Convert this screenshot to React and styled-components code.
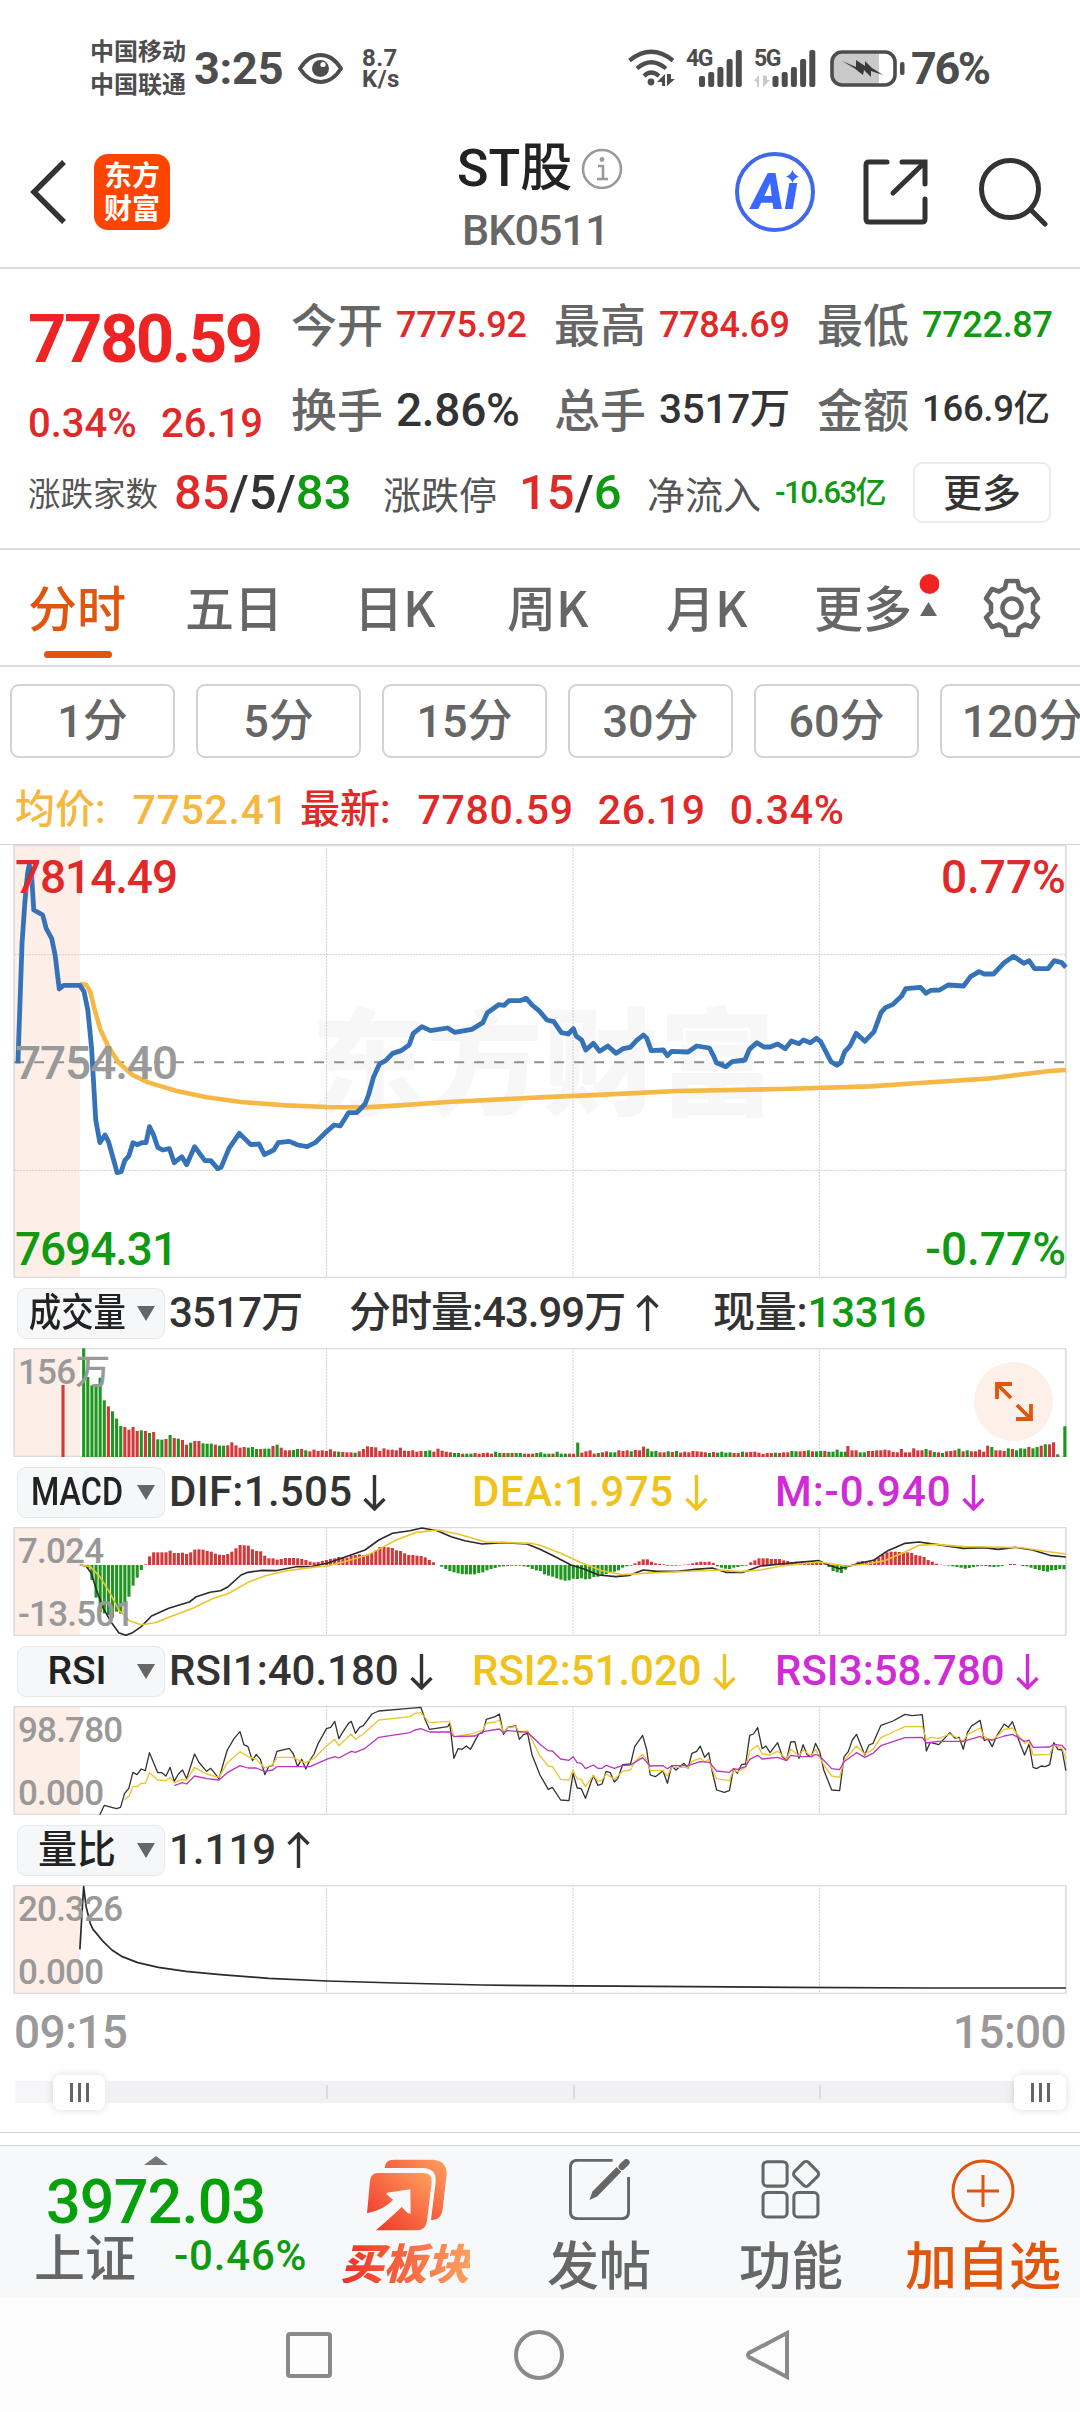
import styled, { createGlobalStyle, css } from 'styled-components';

const RED = '#e02a2a';
const GREEN = '#0f9a12';
const ORANGE = '#e0560c';
const YELLOW = '#f0c31c';
const PURPLE = '#d02bd6';

const GlobalStyle = createGlobalStyle`
  * { box-sizing: border-box; }
  body {
    margin: 0;
    background: #fff;
    font-family: Roboto, 'Noto Sans CJK SC', sans-serif;
    font-weight: 500;
    color: #333;
  }
`;

/* ---------- chart data, 3136 units across the screen ---------- */

const GRID_X = [948, 1664, 2379];

const PRICE =
  '52,670 60,430 64,310 72,190 80,100 85,75 92,110 98,210 112,218 124,225 134,265 150,295 160,345 172,447 185,436 232,436 244,455 255,510 266,625 278,840 290,908 305,885 315,905 330,960 340,998 352,995 362,962 374,948 386,908 398,914 412,908 424,908 434,860 446,885 458,922 472,930 492,926 506,968 528,950 542,974 565,920 595,962 612,962 632,986 642,982 665,925 695,880 728,914 752,912 768,944 795,930 808,908 840,904 865,915 892,920 915,908 945,878 970,855 988,858 1012,818 1036,818 1060,792 1070,765 1085,710 1102,672 1120,662 1140,640 1165,632 1188,615 1200,580 1225,560 1250,572 1300,564 1320,577 1370,568 1402,548 1415,518 1448,494 1464,496 1478,482 1510,482 1528,475 1545,495 1568,515 1588,540 1608,545 1630,578 1650,582 1665,566 1673,588 1689,600 1701,630 1723,610 1741,634 1765,618 1789,640 1809,626 1830,622 1848,602 1868,585 1878,595 1891,632 1926,630 1938,647 1950,634 1998,636 2023,618 2060,624 2073,650 2080,668 2108,680 2126,665 2163,660 2176,628 2198,608 2218,621 2236,621 2258,612 2280,626 2298,603 2320,611 2333,600 2353,608 2371,595 2383,605 2413,665 2430,676 2441,668 2453,635 2468,618 2486,580 2511,604 2538,575 2558,518 2571,503 2593,493 2618,468 2630,446 2673,442 2689,460 2703,451 2728,450 2753,435 2798,438 2818,410 2843,395 2858,402 2885,402 2916,368 2943,349 2973,370 2988,362 3004,386 3043,386 3061,362 3083,368 3095,382';
const AVERAGE =
  '232,432 250,434 262,455 275,510 292,570 315,620 345,668 385,705 430,727 510,752 600,772 700,786 830,796 950,801 1060,802 1160,796 1300,786 1568,772 1768,763 1968,753 2268,747 2528,739 2668,729 2868,716 3048,693 3095,690';

// every run is [x of its first bar, values]; green bars are negative
const VOLUME = [
  [183, [216]],
  [243, [-326, -240, -215, -215, -238, -170, 152, -137, -115, -93, 90, 82, 90, 78, -80, 78, -72, 75, -53, -52, 54, -66, 57, -55, 51, 37, -43, 48, 48, -41, -40, -40, 37, -34, -34, 35, 44, 35, 28, 30, -28, -30, -24, 24, -25, -25, 33, -37, 28, 20, 20]],
  [852, [-21, -24, 24, -20, 17, 22, 18, 20, 18, 23, 17, -16, 15, 14, 14, -13, 17, 24, 32, 30, 29, 18, 26, 22, 22, 20, 28, 19, 18, 20, 16, 18]],
  [1236, [-18, -20, 16, 25, 19, 16, 14, -12, -12, 10, -10, -10, 12, 10, 12, 13, 10, -16, -12, 12, -12, 12, -12, -12, 10, 10, 10, -12]],
  [1570, [-14, -10, -10, 10, -16, -10, -10, 10, 10, -43, 13, 17, 20, 10, -12, 14, 17, -14, -14, 20, 18, 20, -17, 21, 20, 31, -25, -17, -18, 14, 14, -17, 15, -18, 13, 16, 14, 18, 17, 16, 14, -12, 15, -13, -16, -13, -14, 12, 12]],
  [2156, [-16, 14, 15, 16, 13, 9, 12, 12, -13, 12, 14, 14, -18, -17, 17, 18, -20, 17, -17, -18, 18, -16, -16, -22, -16, -16]],
  [2462, [33, 20, 20, -14, -14, 18, 18, 20, 20, 22, 20, 15, 14, 24, 14, 14, 26, 20, 20, -24, 20, -15, 14, -12, 17, 18, 20, -25, 17, -20, 17, 17, 22, 16]],
  [2868, [34, -30, 20, 20, 18, -26, 24, -20, -26, -25, 30, -26, -30, 34, -38, 38, 44, -8]],
  [3092, [-92]],
];
const MACD_BARS = [
  [255, [-10, -45, -98, -142, -145, -150, -158, -140, -146, -120, -95, -62, -38, -15, 2, 26, 38, 38, 38, 38, 43, 36, 36, 37, 33, 38, 46, 47, 46, 42, 40, 34, 31, 30, 33, 40, 50, 60, 59, 58, 47, 42, 41, 28, 20, 20, 16, 18, 21, 21, 21, 20, 18, 15, 10, 8]],
  [924, [9, 12, 15, 18, 20, 24, 22, 22, 28, 30, 32, 30, 32, 36, 44, 54, 54, 53, 51, 44, 42, 35, 30, 30, 28, 27, 23, 15, 8, 0, -5, -12, -18, -22, -25, -27, -28, -28, -28, -24, -22, -16, -12, -9, -5, -4, -3, -2, -2, -2, -4, -6, -12, -16]],
  [1569, [-18, -28, -32, -35, -40, -44, -47, -46, -41, -42, -40, -43, -42, -36, -35, -32, -27, -24, -20, -16, -8, -4, -2, 5, 11, 17, 17, 10, 5, 3, 2, -2, -2, -2, -1, 1, 2, 5, 8, 10, 9, 10, 6, -4, -8, -11, -12, -8, -6, -3, -2]],
  [2180, [8, 14, 20, 20, 20, 18, 18, 18, 14, 12, 9, 10, 8, 8, 8, 8, 8, 6, 2, -6, -18, -22, -24, -14, -4]],
  [2480, [2, 10, 12, 8, 10, 16, 22, 32, 38, 40, 40, 39, 38, 38, 36, 30, 28, 24, 15, 10, 4, 1, -1, -2, -4, -6, -8, -11, -9, -6, -4, -2, -3, -5, -6, -5, -3, 0, 3, 3, 0, -3, -4, -8, -12, -15, -18, -20, -16, -15, -12, -13]],
];
const DIF =
  '232,855 250,858 265,880 280,930 300,985 325,1030 345,1058 365,1066 385,1058 410,1040 440,1008 490,985 530,972 550,966 570,950 610,937 640,932 660,922 700,885 720,877 760,871 800,872 860,860 900,860 950,850 1000,832 1060,810 1100,780 1140,760 1190,752 1225,744 1270,752 1310,770 1350,782 1400,792 1460,788 1530,792 1568,808 1608,828 1658,855 1698,868 1738,885 1788,890 1828,886 1868,870 1908,874 1968,874 2018,868 2068,864 2108,877 2158,877 2208,858 2268,852 2318,847 2378,842 2408,856 2438,866 2488,852 2538,840 2578,812 2628,790 2668,786 2718,793 2798,805 2858,803 2898,808 2948,802 2998,810 3048,826 3095,831';
const DEA =
  '232,855 262,860 290,890 320,940 345,990 375,1022 410,1034 450,1028 500,1008 560,985 620,955 660,942 720,907 770,887 830,873 900,863 950,858 1000,845 1070,824 1110,802 1150,780 1210,757 1270,750 1330,762 1410,786 1480,788 1540,790 1568,796 1628,820 1688,848 1748,872 1808,884 1868,880 1948,876 2018,873 2088,870 2148,875 2208,870 2268,858 2378,846 2418,852 2458,858 2518,852 2568,842 2628,816 2668,796 2718,793 2798,800 2868,801 2968,803 3028,813 3095,822';
const RSI1 =
  '290,524 303,496 338,506 350,502 362,460 374,445 386,397 398,404 410,387 422,392 434,338 446,368 458,398 470,398 482,408 494,382 506,424 518,402 530,390 542,416 565,342 577,366 600,394 612,385 636,416 648,372 660,330 680,295 697,275 708,314 720,320 733,362 744,343 756,358 769,404 780,380 792,376 804,334 840,325 852,342 864,380 876,358 888,387 900,360 912,342 924,310 948,266 960,262 972,244 984,296 996,275 1012,250 1020,244 1032,280 1044,262 1055,257 1080,222 1100,213 1180,206 1222,202 1235,240 1247,268 1300,260 1306,250 1318,355 1330,326 1342,328 1354,318 1366,328 1378,305 1390,282 1402,278 1412,238 1438,230 1450,222 1462,283 1474,262 1498,258 1508,298 1520,284 1532,280 1545,345 1568,405 1592,448 1604,442 1628,480 1652,482 1664,400 1676,444 1688,446 1700,475 1723,406 1736,436 1748,432 1760,394 1772,398 1784,426 1794,415 1808,374 1831,372 1843,320 1866,286 1878,330 1888,405 1903,410 1925,392 1938,430 1950,378 1963,390 1986,370 1998,384 2009,340 2023,334 2033,318 2046,352 2058,338 2068,395 2081,450 2103,457 2118,452 2130,386 2141,400 2153,374 2165,372 2177,286 2188,282 2200,263 2213,326 2224,318 2236,338 2258,308 2272,350 2284,360 2296,306 2308,305 2320,355 2332,314 2344,345 2356,350 2368,310 2380,335 2392,390 2415,450 2438,452 2451,350 2463,335 2475,300 2487,283 2511,345 2523,315 2535,310 2558,256 2593,243 2628,223 2648,227 2678,224 2690,333 2701,307 2726,314 2758,278 2773,294 2785,292 2797,328 2809,278 2821,258 2846,241 2858,302 2868,296 2881,320 2893,290 2916,252 2928,262 2940,245 2958,300 2975,345 2988,312 3000,382 3010,386 3023,378 3035,380 3048,374 3060,308 3072,328 3084,330 3095,392';
const RSI2 =
  '362,478 374,470 386,440 398,440 410,430 422,430 434,398 458,420 482,422 494,412 506,428 530,418 542,420 565,382 600,402 636,412 660,368 697,335 720,350 744,358 769,384 792,374 804,352 850,352 876,365 888,368 912,355 948,318 972,298 984,317 1020,282 1032,298 1055,282 1100,240 1190,230 1205,220 1222,218 1247,248 1306,244 1318,290 1366,282 1402,270 1412,250 1438,246 1450,240 1462,278 1474,262 1498,260 1508,278 1532,272 1568,348 1592,378 1604,380 1628,418 1652,420 1664,390 1676,416 1688,418 1700,440 1723,406 1736,424 1748,420 1760,402 1784,418 1808,394 1831,390 1843,365 1866,343 1878,360 1888,392 1925,392 1938,408 1950,382 1998,382 2009,364 2033,355 2046,366 2058,358 2068,388 2081,416 2118,422 2130,390 2141,396 2165,382 2177,334 2200,316 2213,342 2236,345 2258,334 2284,358 2296,328 2320,348 2332,330 2356,348 2368,328 2392,375 2415,408 2438,412 2451,362 2487,318 2511,342 2535,328 2558,293 2593,276 2628,260 2678,259 2690,300 2701,292 2726,295 2758,282 2797,303 2809,284 2846,264 2858,290 2881,302 2916,268 2940,264 2958,288 2975,310 2988,303 3000,345 3048,343 3060,314 3084,325 3095,356';
const RSI3 =
  '506,437 530,428 542,432 565,408 600,416 636,420 660,398 697,377 720,384 744,384 769,394 792,390 804,380 876,380 900,380 948,358 972,350 984,354 1020,334 1032,337 1060,325 1100,292 1190,278 1205,270 1222,266 1247,276 1306,276 1318,290 1380,288 1402,275 1450,267 1462,278 1474,272 1532,277 1568,313 1592,332 1604,333 1628,357 1652,361 1664,350 1676,368 1688,370 1700,386 1723,375 1736,385 1748,385 1760,376 1784,385 1808,376 1831,375 1866,353 1888,378 1925,377 1938,386 1950,377 1998,377 2033,365 2060,367 2081,393 2118,397 2130,386 2141,388 2165,380 2177,358 2200,346 2213,357 2258,352 2284,362 2296,346 2320,350 2356,350 2368,343 2380,348 2415,386 2438,389 2451,365 2487,338 2511,352 2535,340 2558,317 2593,305 2628,293 2678,292 2690,309 2726,304 2797,304 2846,289 2858,298 2881,300 2916,288 2940,283 2975,304 2988,300 3000,322 3048,321 3060,313 3084,316 3095,330';
const RATIO =
  '232,928 238,820 243,740 250,800 262,850 270,868 280,880 300,905 325,930 355,950 400,968 460,982 540,994 640,1004 780,1015 950,1023 1150,1029 1400,1035 1568,1037 1900,1039 2300,1042 2700,1044 3095,1044';

/* ---------- chart pieces ---------- */

function Line({ points, color, width = 1.6 }) {
  return (
    <polyline
      points={points}
      fill="none"
      stroke={color}
      strokeWidth={width}
      strokeLinejoin="round"
      vectorEffect="non-scaling-stroke"
    />
  );
}

function Bars({ runs, base }) {
  return runs.map(([start, values]) =>
    values.map((v, i) => (
      <rect
        key={`${start}-${i}`}
        x={start - 4.5 + i * 11.95}
        y={base(v)}
        width="9"
        height={Math.abs(v)}
        fill={v < 0 ? '#1f961f' : '#d03a3a'}
      />
    ))
  );
}

function Plot({ top, height, rows = [], children }) {
  const bottom = top + height;
  return (
    <PlotSvg
      viewBox={`0 ${top} 3136 ${height}`}
      preserveAspectRatio="none"
      $height={height / 3}>
      <rect x="41" y={top} width="191" height={height} fill="#fdeee7" />
      {GRID_X.map((x) => (
        <line key={x} x1={x} x2={x} y1={top} y2={bottom} stroke="#cfcfcf" strokeWidth="1" strokeDasharray="2 1" vectorEffect="non-scaling-stroke" />
      ))}
      {rows.map((y) => (
        <line key={y} x1="41" x2="3095" y1={y} y2={y} stroke="#cfcfcf" strokeWidth="1" strokeDasharray="2 1" vectorEffect="non-scaling-stroke" />
      ))}
      <rect x="41" y={top + 1.5} width="3054" height={height - 3} fill="none" stroke="#dcdcdc" strokeWidth="1.6" vectorEffect="non-scaling-stroke" />
      {children}
    </PlotSvg>
  );
}

/* ---------- icons ---------- */

function Arrow({ up }) {
  return (
    <ArrowSvg viewBox="0 0 22 37">
      <path
        d={up ? 'M11 36V2M1 12L11 2L21 12' : 'M11 1V35M1 25L11 35L21 25'}
        fill="none"
        stroke="currentColor"
        strokeWidth="3.4"
      />
    </ArrowSvg>
  );
}

function Signal({ label, x, dim }) {
  return (
    <SignalBox>
      <SignalLabel>{label}</SignalLabel>
      <svg width="64" height="37" viewBox="0 0 64 37">
        {dim && <path d="M0 31l5-6v12h-2v-5zM9 25v12l7-7h-3v-4z" fill="#cacaca" />}
        {[11, 15, 20, 28, 37].map((h, i) => (
          <rect key={h} x={x + i * 9.2} y={37 - h} width="6" height={h} rx="2" fill="#4d4d4d" />
        ))}
      </svg>
    </SignalBox>
  );
}

function StatusRow() {
  return (
    <StatusBar>
      <Carriers>
        <span>中国移动</span>
        <span>中国联通</span>
      </Carriers>
      <StatusBig>3:25</StatusBig>
      <svg width="45" height="31" viewBox="0 0 45 31">
        <path d="M2 15.5C8 6 15 2 22.500 2S37 6 43 15.500C37 25 30 29 22.500 29S8 25 2 15.500z" fill="none" stroke="#4d4d4d" strokeWidth="3.800" />
        <circle cx="22.500" cy="15.500" r="8.500" fill="#4d4d4d" />
        <circle cx="25" cy="11.500" r="2.600" fill="#fff" />
      </svg>
      <Speed>
        <span>8.7</span>
        <span>K/s</span>
      </Speed>
      <svg width="48" height="38" viewBox="0 0 48 38">
        <g fill="none" stroke="#4d4d4d" strokeWidth="4.200">
          <path d="M1.500 11.500Q23 -6 45 11.500" />
          <path d="M9 19.500Q23 7 38 19.500" />
          <path d="M16 27Q23 20 31 27" />
        </g>
        <circle cx="23" cy="33" r="3.400" fill="#4d4d4d" />
        <path d="M29 33l8-8v12h-3v-4zM39 25v12l8-7h-4v-5z" fill="#4d4d4d" />
      </svg>
      <Signal label="4G" x={13} />
      <Signal label="5G" x={18.5} dim />
      <svg width="76" height="37" viewBox="0 0 76 37">
        <path d="M12 2H49V35H12Q2 35 2 25V12Q2 2 12 2z" fill="#c9c9c9" />
        <rect x="2" y="2" width="63" height="33" rx="10" fill="none" stroke="#4d4d4d" strokeWidth="3.600" />
        <rect x="70" y="12" width="4.500" height="13" rx="2" fill="#4d4d4d" />
        <path d="M12 11L26 17L26 10L35 16V11L42 18L53 25L41 21V27L34 20L33 25L24 18z" fill="#3a3a3a" />
      </svg>
      <StatusBig $tight>76%</StatusBig>
    </StatusBar>
  );
}

function TopBar() {
  return (
    <Header>
      <HeaderLeft>
        <svg width="38" height="64" viewBox="0 0 38 64">
          <path d="M34 2L4 32L34 62" fill="none" stroke="#333" strokeWidth="5.500" />
        </svg>
        <Brand>
          <span>东方</span>
          <span>财富</span>
        </Brand>
      </HeaderLeft>
      <Title>
        <TitleName>
          ST股
          <svg width="42" height="42" viewBox="0 0 42 42">
            <circle cx="21" cy="21" r="19" fill="none" stroke="#9a9a9a" strokeWidth="2.600" />
            <path d="M17 18h5v13M16 31h11" fill="none" stroke="#9a9a9a" strokeWidth="2.600" />
            <circle cx="21" cy="11.500" r="2.400" fill="#9a9a9a" />
          </svg>
        </TitleName>
        <TitleCode>BK0511</TitleCode>
      </Title>
      <AiButton>
        A<i>ı</i>
        <AiStar viewBox="0 0 14 14">
          <path d="M7 0Q8.500 5 14 7Q8.500 9 7 14Q5.500 9 0 7Q5.500 5 7 0z" fill="#3a68ff" />
        </AiStar>
      </AiButton>
      <ShareIcon viewBox="0 0 66 66">
        <path d="M24 3H6Q3 3 3 6V60Q3 63 6 63H59Q62 63 62 60V40M39 3H62V25M61 4L30 34" />
      </ShareIcon>
      <SearchIcon viewBox="0 0 69 69">
        <circle cx="31" cy="31" r="28.500" />
        <path d="M52 52L66 66" />
      </SearchIcon>
    </Header>
  );
}

const QUOTES = [
  { label: '今开', value: '7775.92', color: RED, size: 36 },
  { label: '最高', value: '7784.69', color: RED, size: 36 },
  { label: '最低', value: '7722.87', color: GREEN, size: 36 },
  { label: '换手', value: '2.86%', size: 46 },
  { label: '总手', value: '3517万', size: 40.5 },
  { label: '金额', value: '166.9亿', size: 36.5 },
];

function QuotePanel() {
  return (
    <Quote>
      <QuoteMain>
        <div>
          <LastPrice>7780.59</LastPrice>
          <Change>
            <span>0.34%</span>
            <span>26.19</span>
          </Change>
        </div>
        <QuoteGrid>
          {QUOTES.map((q) => (
            <QuoteItem key={q.label}>
              <QuoteLabel>{q.label}</QuoteLabel>
              <QuoteValue $color={q.color} $size={q.size}>
                {q.value}
              </QuoteValue>
            </QuoteItem>
          ))}
        </QuoteGrid>
      </QuoteMain>
      <Breadth>
        <BreadthLabel $size={32.5}>涨跌家数</BreadthLabel>
        <Counts>
          <Up>85</Up>/5/<Down>83</Down>
        </Counts>
        <BreadthLabel $size={38}>涨跌停</BreadthLabel>
        <Counts>
          <Up>15</Up>/<Down>6</Down>
        </Counts>
        <BreadthLabel $size={38}>净流入</BreadthLabel>
        <Inflow>-10.63亿</Inflow>
        <MoreButton>更多</MoreButton>
      </Breadth>
    </Quote>
  );
}

function PeriodTabs() {
  return (
    <Tabs>
      <Tab $active>分时</Tab>
      <Tab>五日</Tab>
      <Tab>日K</Tab>
      <Tab>周K</Tab>
      <Tab>月K</Tab>
      <Tab>
        更多
        <TabBadge viewBox="0 0 20 45">
          <circle cx="10.500" cy="11" r="10" fill="#f02323" />
          <path d="M1 43L9.500 29L18 43z" fill="#666" />
        </TabBadge>
      </Tab>
      <svg width="60" height="60" viewBox="0 0 60 60" fill="none" stroke="#666" strokeWidth="4.600" strokeLinejoin="round">
        <path d="M24.500 3H35.500L37 10L43 13.500L50 11L56 20.500L51 26V34L56 39.500L50 49L43 46.500L37 50L35.500 57H24.500L23 50L17 46.500L10 49L4 39.500L9 34V26L4 20.500L10 11L17 13.500L23 10z" />
        <circle cx="30" cy="30" r="9.500" />
      </svg>
    </Tabs>
  );
}

function Indicator({ name, squeeze, values, labels, top, children, extra }) {
  return (
    <>
      <IndicatorHead>
        <Picker>
          <PickerName $squeeze={squeeze}>{name}</PickerName>
          <svg width="18" height="15" viewBox="0 0 18 15">
            <path d="M0 0H18L9 15z" fill="#666" />
          </svg>
        </Picker>
        {values.map((v) => (
          <IndicatorValue key={v.text} $color={v.color} $width={v.width} $spacing={v.spacing}>
            {v.text}
            {v.green && <Down>{v.green}</Down>}
            {v.dir && <Arrow up={v.dir === 'up'} />}
          </IndicatorValue>
        ))}
      </IndicatorHead>
      <Pane>
        <Plot top={top} height={327}>
          {children}
        </Plot>
        <PaneLabels>
          {labels.map((l) => (
            <span key={l}>{l}</span>
          ))}
        </PaneLabels>
        {extra}
      </Pane>
    </>
  );
}

function Grip() {
  return (
    <GripBox>
      <i />
      <i />
      <i />
    </GripBox>
  );
}

function BottomBar() {
  return (
    <Toolbar>
      <IndexBlock>
        <svg width="24" height="9" viewBox="0 0 24 9">
          <path d="M0 9L12 0L24 9z" fill="#777" />
        </svg>
        <IndexValue>3972.03</IndexValue>
        <IndexRow>
          <IndexName>上证</IndexName>
          <span>-0.46%</span>
        </IndexRow>
      </IndexBlock>
      <Action>
        <svg width="80" height="72" viewBox="0 0 240 216">
          <defs>
            <linearGradient id="buy" x1="0" y1="1" x2="1" y2="0">
              <stop offset="0" stopColor="#ee2f26" />
              <stop offset="1" stopColor="#ffa15e" />
            </linearGradient>
          </defs>
          <g fill="url(#buy)">
            <path d="M53 27Q54 2 80 2H195Q240 4 239 45L227 150Q222 186 192 183L206 70Q210 30 170 27z" />
            <path d="M32 42H168Q197 42 194 70L180 185Q177 214 148 214H27Q75 172 104 144L122 162L131 164L130 91L60 101L58 106L78 122Q55 150 0 163L9 65Q12 42 32 42z" />
          </g>
        </svg>
        <BuyLabel>买板块</BuyLabel>
      </Action>
      <Action>
        <svg width="61" height="61" viewBox="0 0 182 182">
          <path d="M130 4H26Q4 4 4 26V156Q4 178 26 178H156Q178 178 178 156V54" fill="none" stroke="#666" strokeWidth="9" />
          <path d="M61 122L70 97L142 24L156 38L84 112z" fill="#666" />
          <path d="M158 23L171 10" stroke="#666" strokeWidth="20" strokeLinecap="round" />
        </svg>
        <ActionLabel>发帖</ActionLabel>
      </Action>
      <Action>
        <svg width="61" height="61" viewBox="0 0 180 180" fill="none" stroke="#666" strokeWidth="9">
          <rect x="6" y="8" width="71" height="72" rx="12" />
          <rect x="6" y="99" width="71" height="72" rx="12" />
          <rect x="97" y="99" width="71" height="72" rx="12" />
          <rect x="104" y="15" width="58" height="58" rx="10" transform="rotate(45 133 44)" />
        </svg>
        <ActionLabel>功能</ActionLabel>
      </Action>
      <Action>
        <svg width="64" height="64" viewBox="0 0 64 64" fill="none" stroke={ORANGE} strokeWidth="3">
          <circle cx="32" cy="32" r="30" />
          <path d="M32 16V48M16 32H48" />
        </svg>
        <ActionLabel $accent>加自选</ActionLabel>
      </Action>
    </Toolbar>
  );
}

export default function App() {
  return (
    <Screen>
      <GlobalStyle />
      <StatusRow />
      <TopBar />
      <QuotePanel />
      <PeriodTabs />
      <Minutes>
        {['1分', '5分', '15分', '30分', '60分', '120分'].map((m) => (
          <Minute key={m}>{m}</Minute>
        ))}
      </Minutes>
      <Legend>
        <LegendItem $color="#f6b73f" $width={285}>
          均价:<b>7752.41</b>
        </LegendItem>
        <LegendItem $color={RED}>
          最新:<b>7780.59</b>
          <b>26.19</b>
          <b>0.34%</b>
        </LegendItem>
      </Legend>

      <Pane $main>
        <Watermark>东方财富</Watermark>
        <Plot top={15} height={1299} rows={[344, 991]}>
          <line x1="41" x2="3095" y1="667" y2="667" stroke="#8f8f8f" strokeWidth="2" strokeDasharray="10 10" vectorEffect="non-scaling-stroke" />
          <Line points={AVERAGE} color="#f6b845" width={4.6} />
          <Line points={PRICE} color="#3672b8" width={4.8} />
        </Plot>
        <Scale>
          <Up>7814.49</Up>
          <span>7754.40</span>
          <Down>7694.31</Down>
        </Scale>
        <Scale $right>
          <Up>0.77%</Up>
          <Down>-0.77%</Down>
        </Scale>
      </Pane>

      <Indicator
        name="成交量"
        squeeze
        top={204}
        labels={['156万']}
        values={[
          { text: '3517万', width: 180, spacing: -0.8 },
          { text: '分时量:43.99万', width: 364, spacing: -1, dir: 'up' },
          { text: '现量:', green: '13316', spacing: -0.2 },
        ]}
        extra={
          <Expand>
            <svg width="38" height="39" viewBox="0 0 38 39" fill="none" stroke={ORANGE} strokeWidth="3.800">
              <path d="M2 17V2H17M2 2L16 16M36 22V37H21M36 37L22 23" />
            </svg>
          </Expand>
        }>
        <Bars runs={VOLUME} base={(v) => 531 - Math.abs(v)} />
      </Indicator>

      <Indicator
        name="MACD"
        squeeze
        top={741}
        labels={['7.024', '-13.501']}
        values={[
          { text: 'DIF:1.505', width: 303, spacing: 0.3, dir: 'down' },
          { text: 'DEA:1.975', color: YELLOW, width: 303, spacing: 0.5, dir: 'down' },
          { text: 'M:-0.940', color: PURPLE, spacing: 0.9, dir: 'down' },
        ]}>
        <Bars runs={MACD_BARS} base={(v) => (v < 0 ? 855 : 855 - v)} />
        <Line points={DIF} color="#2b2b2b" />
        <Line points={DEA} color="#ecc52c" />
      </Indicator>

      <Indicator
        name="RSI"
        top={198}
        labels={['98.780', '0.000']}
        values={[
          { text: 'RSI1:40.180', width: 303, dir: 'down' },
          { text: 'RSI2:51.020', color: YELLOW, width: 303, dir: 'down' },
          { text: 'RSI3:58.780', color: PURPLE, dir: 'down' },
        ]}>
        <Line points={RSI1} color="#333" width={1.3} />
        <Line points={RSI2} color="#ecc52c" width={1.3} />
        <Line points={RSI3} color="#bb35c0" width={1.3} />
      </Indicator>

      <Indicator
        name="量比"
        top={735}
        labels={['20.326', '0.000']}
        values={[{ text: '1.119', dir: 'up' }]}>
        <Line points={RATIO} color="#2b2b2b" width={1.7} />
      </Indicator>

      <TimeAxis>
        <span>09:15</span>
        <span>15:00</span>
      </TimeAxis>
      <Slider>
        <Grip />
        <Track>
          <i />
          <i />
          <i />
        </Track>
        <Grip />
      </Slider>
      <Spacer />
      <BottomBar />
      <NavBar>
        <svg width="46" height="46" viewBox="0 0 46 46">
          <rect x="2" y="2" width="42" height="42" rx="2" />
        </svg>
        <svg width="50" height="50" viewBox="0 0 50 50">
          <circle cx="25" cy="25" r="23" />
        </svg>
        <svg width="44" height="50" viewBox="0 0 44 50">
          <path d="M41 3V47L3 27Q1 25 3 23z" />
        </svg>
      </NavBar>
    </Screen>
  );
}

/* ---------- styles ---------- */

const Screen = styled.div`
  width: 1080px;
  height: 2412px;
  overflow: hidden;
  background: #fff;
  line-height: 1;
  white-space: nowrap;
  svg { display: block; flex: none; }
`;
const cjk = css`
  font-family: 'Noto Sans CJK SC', sans-serif;
`;
const Up = styled.span`
  color: ${RED};
`;
const Down = styled.span`
  color: ${GREEN};
`;

const StatusBar = styled.div`
  height: 135px;
  padding: 1px 0 0 90px;
  display: grid;
  grid-template-columns: 104px 104px 64px 266px 58px 68px 76px 81px 1fr;
  align-items: center;
  color: #4d4d4d;
`;
const Carriers = styled.div`
  ${cjk}
  padding-bottom: 4px;
  display: flex;
  flex-direction: column;
  gap: 9px;
  font-size: 24px;
  font-weight: 700;
`;
const StatusBig = styled.div`
  font-size: 45px;
  font-weight: 700;
  letter-spacing: ${(p) => (p.$tight ? -2.4 : -0.2)}px;
`;
const Speed = styled.div`
  display: flex;
  flex-direction: column;
  gap: 1px;
  font-size: 24px;
  line-height: 20px;
  font-weight: 700;
  letter-spacing: 0.4px;
`;
const SignalBox = styled.div`
  position: relative;
`;
const SignalLabel = styled.span`
  position: absolute;
  left: 0;
  top: -3px;
  font-size: 23px;
  font-weight: 700;
  letter-spacing: -1.5px;
`;

const Header = styled.header`
  height: 134px;
  padding-bottom: 18px;
  border-bottom: 2px solid #dcdcdc;
  display: flex;
  align-items: center;
`;
const HeaderLeft = styled.div`
  width: 435px;
  padding-left: 30px;
  display: flex;
  align-items: center;
  gap: 26px;
`;
const Brand = styled.div`
  ${cjk}
  width: 76px;
  height: 76px;
  border-radius: 14px;
  background: #ff4400;
  color: #fff;
  font-size: 28px;
  font-weight: 700;
  display: flex;
  flex-direction: column;
  align-items: center;
  justify-content: center;
  gap: 5px;
  padding-bottom: 3px;
`;
const Title = styled.div`
  width: 300px;
  padding-top: 11px;
`;
const TitleName = styled.div`
  padding-left: 22px;
  display: flex;
  align-items: center;
  gap: 9px;
  font-size: 52px;
  color: #222;
`;
const TitleCode = styled.div`
  margin-top: 14px;
  padding-left: 27px;
  font-size: 43px;
  letter-spacing: -0.9px;
  color: #666;
`;
const AiButton = styled.div`
  position: relative;
  width: 80px;
  height: 80px;
  border: 4px solid #3f68ea;
  border-radius: 50%;
  color: #3a68ff;
  font-size: 49px;
  font-weight: 900;
  font-style: italic;
  display: flex;
  align-items: center;
  justify-content: center;
`;
const AiStar = styled.svg`
  position: absolute;
  width: 13px;
  height: 13px;
  left: 47px;
  top: 14px;
`;
const ShareIcon = styled.svg`
  width: 66px;
  height: 66px;
  margin-left: 48px;
  fill: none;
  stroke: #333;
  stroke-width: 5;
  stroke-linecap: round;
`;
const SearchIcon = styled(ShareIcon)`
  width: 69px;
  height: 69px;
  margin-left: 50px;
`;

const Quote = styled.section`
  height: 281px;
  padding: 13px 28px 0 28px;
  border-bottom: 2px solid #dcdcdc;
`;
const QuoteMain = styled.div`
  display: grid;
  grid-template-columns: 263px 1fr;
`;
const LastPrice = styled.div`
  height: 114px;
  line-height: 115px;
  font-size: 67px;
  font-weight: 700;
  letter-spacing: -2.5px;
  color: #ee2424;
`;
const Change = styled.div`
  height: 56px;
  display: flex;
  justify-content: space-between;
  align-items: center;
  padding-right: 28px;
  font-size: 40px;
  color: ${RED};
`;
const QuoteGrid = styled.div`
  display: grid;
  grid-template-columns: 263px 263px 1fr;
  grid-auto-rows: 85px;
`;
const QuoteItem = styled.div`
  display: grid;
  grid-template-columns: 105px 1fr;
  align-items: center;
`;
const QuoteLabel = styled.span`
  ${cjk}
  padding-bottom: 6px;
  font-size: 46px;
  color: #666;
`;
const QuoteValue = styled.span`
  font-size: ${(p) => p.$size}px;
  letter-spacing: -0.3px;
  color: ${(p) => p.$color || '#333'};
`;
const Breadth = styled.div`
  height: 81px;
  display: grid;
  grid-template-columns: 146px 209px 136px 128px 128px 138px 138px;
  align-items: center;
`;
const BreadthLabel = styled.span`
  ${cjk}
  font-size: ${(p) => p.$size}px;
  font-weight: 400;
  color: #555;
`;
const Counts = styled.span`
  font-size: 49px;
`;
const Inflow = styled.span`
  font-size: 31px;
  letter-spacing: -1.5px;
  color: ${GREEN};
`;
const MoreButton = styled.button`
  ${cjk}
  width: 138px;
  height: 61px;
  padding: 0 0 4px;
  border: 2px solid #ebebeb;
  border-radius: 9px;
  background: #fff;
  font-size: 39px;
  font-weight: 500;
  line-height: 1;
  color: #333;
`;

const Tabs = styled.nav`
  height: 117px;
  padding: 0 0 1px 28px;
  border-bottom: 2px solid #dcdcdc;
  display: grid;
  grid-template-columns: 157px 169px 153px 159px 148px 168px 1fr;
  align-items: center;
`;
const Tab = styled.div`
  ${cjk}
  position: relative;
  height: 115px;
  line-height: 111px;
  font-size: 49px;
  color: ${(p) => (p.$active ? ORANGE : '#666')};
  ${(p) =>
    p.$active &&
    css`
      &::after {
        content: '';
        position: absolute;
        left: 16px;
        bottom: 7px;
        width: 68px;
        height: 7px;
        border-radius: 4px;
        background: ${ORANGE};
      }
    `}
`;
const TabBadge = styled.svg`
  position: absolute;
  left: 105px;
  top: 23px;
  width: 20px;
  height: 45px;
`;
const Minutes = styled.div`
  padding: 17px 0 0 10px;
  display: flex;
  gap: 21px;
`;
const Minute = styled.div`
  flex: none;
  width: 165px;
  height: 74px;
  border: 2px solid #d2d2d2;
  border-radius: 9px;
  display: flex;
  align-items: center;
  justify-content: center;
  font-size: 45px;
  color: #666;
`;
const Legend = styled.div`
  height: 87px;
  padding: 19px 0 0 15px;
  border-bottom: 1px solid #d5d5d5;
  display: flex;
`;
const LegendItem = styled.div`
  width: ${(p) => (p.$width ? `${p.$width}px` : 'auto')};
  display: flex;
  align-items: center;
  height: 66px;
  font-size: 40px;
  color: ${(p) => p.$color};
  b {
    font-weight: 500;
    font-size: 41px;
    letter-spacing: 0.7px;
    margin-left: 27px;
  }
  b + b {
    margin-left: 24px;
  }
`;

const Pane = styled.div`
  position: relative;
  height: ${(p) => (p.$main ? 433 : 109)}px;
`;
const PlotSvg = styled.svg`
  position: relative;
  width: 1080px;
  height: ${(p) => p.$height}px;
`;
const Watermark = styled.div`
  ${cjk}
  position: absolute;
  left: 311px;
  top: 152px;
  font-size: 116px;
  font-weight: 900;
  color: #f7f7f7;
`;
const Scale = styled.div`
  position: absolute;
  top: 9px;
  bottom: 6px;
  ${(p) => (p.$right ? 'right: 14px;' : 'left: 15px;')}
  display: flex;
  flex-direction: column;
  justify-content: space-between;
  text-align: right;
  font-size: 46px;
  letter-spacing: ${(p) => (p.$right ? 0 : -1.1)}px;
  color: #999;
`;
const IndicatorHead = styled.div`
  height: 70px;
  padding-left: 17px;
  display: flex;
  align-items: center;
`;
const Picker = styled.div`
  width: 148px;
  height: 51px;
  margin-right: 4px;
  border: 1px solid #e6e8ec;
  border-radius: 9px;
  background: #f6f7f9;
  display: flex;
  align-items: center;
  justify-content: space-between;
  padding: 0 9px 0 3px;
`;
const PickerName = styled.span`
  width: 116px;
  margin: 0 -2px;
  text-align: center;
  font-size: 39px;
  color: #222;
  transform: scaleX(${(p) => (p.$squeeze ? 0.83 : 1)});
`;
const IndicatorValue = styled.div`
  width: ${(p) => (p.$width ? `${p.$width}px` : 'auto')};
  display: flex;
  align-items: center;
  font-size: 42px;
  letter-spacing: ${(p) => p.$spacing || 0}px;
  color: ${(p) => p.$color || '#333'};
`;
const ArrowSvg = styled.svg`
  width: 23px;
  height: 37px;
  margin-left: 11px;
`;
const PaneLabels = styled.div`
  position: absolute;
  inset: 7px auto 4px 18px;
  display: flex;
  flex-direction: column;
  justify-content: space-between;
  font-size: 35px;
  letter-spacing: -0.8px;
  color: #999;
`;
const Expand = styled.div`
  position: absolute;
  right: 27px;
  top: 14px;
  width: 79px;
  height: 79px;
  border-radius: 50%;
  background: #fdf0e8;
  display: flex;
  align-items: center;
  justify-content: center;
`;

const TimeAxis = styled.div`
  height: 76px;
  padding: 0 14px 0 14px;
  display: flex;
  justify-content: space-between;
  align-items: center;
  font-size: 46px;
  letter-spacing: -0.7px;
  color: #999;
`;
const Slider = styled.div`
  height: 44px;
  margin: 0 14px 0 15px;
  padding-left: 38px;
  display: flex;
  align-items: center;
  background: linear-gradient(#f6f6f8, #f6f6f8) 0 11px / 60px 22px no-repeat;
`;
const Track = styled.div`
  flex: 1;
  height: 22px;
  background: #f1f1f3;
  padding-left: 221px;
  display: flex;
  align-items: center;
  gap: 244.5px;
  i {
    width: 2px;
    height: 14px;
    background: #dcdcde;
  }
`;
const GripBox = styled.div`
  width: 52px;
  height: 35px;
  border-radius: 7px;
  background: #fff;
  box-shadow: 0 0 8px rgba(0, 0, 0, 0.14);
  display: flex;
  align-items: center;
  justify-content: center;
  gap: 5px;
  i {
    width: 3px;
    height: 19px;
    background: #666;
  }
`;
const Spacer = styled.div`
  height: 31px;
  border-bottom: 12px solid #fff;
  background: linear-gradient(#d5d5d5, #d5d5d5) 0 100% / 100% 1px no-repeat;
  background-clip: padding-box;
`;

const Toolbar = styled.div`
  height: 153px;
  border-top: 1px solid #d5d5d5;
  background: #f6f8fa;
  display: grid;
  grid-template-columns: 311px repeat(4, 192px);
`;
const IndexBlock = styled.div`
  padding-top: 10px;
  color: ${GREEN};
  > svg { margin-left: 144px; }
`;
const IndexValue = styled.div`
  margin: 7px 0 0 46px;
  font-size: 61px;
  letter-spacing: -0.8px;
  color: #06a00b;
`;
const IndexRow = styled.div`
  margin-top: -3px;
  padding-left: 34px;
  display: flex;
  align-items: center;
  gap: 38px;
  font-size: 42px;
  letter-spacing: 0.8px;
`;
const IndexName = styled.span`
  ${cjk}
  font-size: 51px;
  letter-spacing: 0;
  color: #666;
`;
const Action = styled.div`
  display: flex;
  flex-direction: column;
  align-items: center;
  justify-content: space-between;
  padding: 13px 0 9px;
`;
const ActionLabel = styled.span`
  ${cjk}
  font-size: 52px;
  color: ${(p) => (p.$accent ? ORANGE : '#666')};
`;
const BuyLabel = styled.span`
  ${cjk}
  margin: 0 4px 6px 0;
  font-size: 43px;
  font-weight: 900;
  font-style: italic;
  background: linear-gradient(90deg, #ee2f26, #ffa15e);
  background-clip: text;
  color: transparent;
`;
const NavBar = styled.div`
  height: 114px;
  padding-left: 286px;
  background: #fcfcfc;
  display: flex;
  align-items: center;
  gap: 182px;
  svg {
    fill: none;
    stroke: #8a8a8a;
    stroke-width: 4;
  }
`;
